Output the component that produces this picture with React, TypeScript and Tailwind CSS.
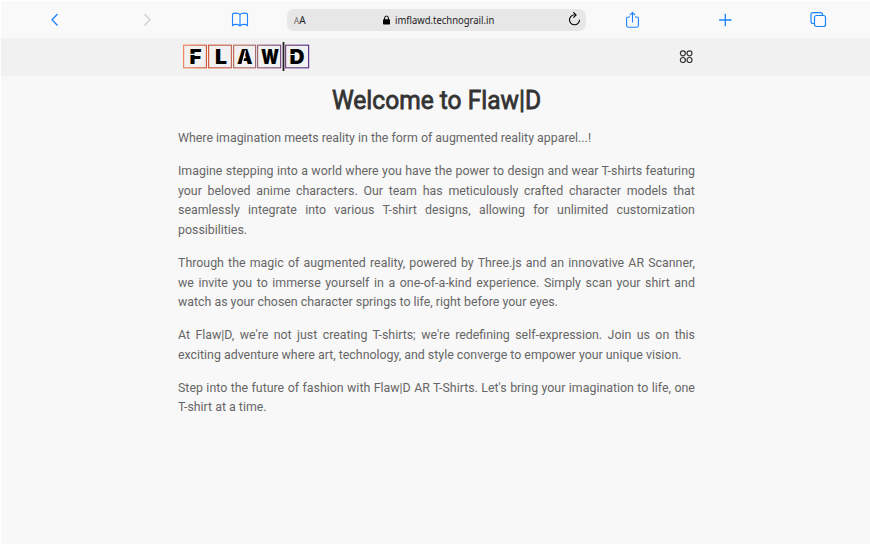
import React from "react";

const paragraphs: string[][] = [
  ["Where imagination meets reality in the form of augmented reality apparel...!"],
  [
    "Imagine stepping into a world where you have the power to design and wear T-shirts featuring",
    "your beloved anime characters. Our team has meticulously crafted character models that",
    "seamlessly integrate into various T-shirt designs, allowing for unlimited customization",
    "possibilities.",
  ],
  [
    "Through the magic of augmented reality, powered by Three.js and an innovative AR Scanner,",
    "we invite you to immerse yourself in a one-of-a-kind experience. Simply scan your shirt and",
    "watch as your chosen character springs to life, right before your eyes.",
  ],
  [
    "At Flaw|D, we're not just creating T-shirts; we're redefining self-expression. Join us on this",
    "exciting adventure where art, technology, and style converge to empower your unique vision.",
  ],
  [
    "Step into the future of fashion with Flaw|D AR T-Shirts. Let's bring your imagination to life, one",
    "T-shirt at a time.",
  ],
];

function Toolbar() {
  return (
    <div className="flex h-[37px] items-center bg-[#f9f9f9] text-[#1a84ff]">
      <svg className="ml-[49px] h-4 w-2.5" viewBox="0 0 10 16" fill="none" stroke="currentColor" strokeWidth="1.3">
        <path d="M7.500 2 2 7.800l5.500 5.700" />
      </svg>
      <svg className="ml-[82px] h-4 w-2.5 text-[#cfcfcf]" viewBox="0 0 10 16" fill="none" stroke="currentColor" strokeWidth="1.3">
        <path d="m2.500 2 5.500 5.800-5.500 5.700" />
      </svg>
      <svg className="ml-[79px] h-4 w-[18px]" viewBox="0 0 18 16" fill="none" stroke="currentColor" strokeWidth="1.1">
        <path d="M9 2.700C8.200 1.500 6.800 1.100 5 1.100S1.800 1.500 1.500 2.100v11.300c.6-.7 1.900-1 3.500-1s3.200.3 4 1.500c.8-1.200 2.400-1.500 4-1.500s2.900.3 3.500 1V2.100c-.3-.6-1.700-1-3.500-1S9.800 1.500 9 2.700Zm0 0v11.200" />
      </svg>
      <div className="ml-[38px] flex h-[22px] w-[299px] items-center rounded-[7px] bg-[#e7e7e7] font-['Noto_Sans',sans-serif] text-[#222]">
        <span className="ml-[7px] flex w-[13px] items-baseline leading-none">
          <span className="text-[8px] text-[#666]">A</span>
          <span className="text-[10px]">A</span>
        </span>
        <svg className="ml-[76px] h-[10px] w-[7px] text-black" viewBox="0 0 7 10">
          <path d="M1.600 5V3a1.900 1.900 0 0 1 3.800 0v2" fill="none" stroke="currentColor" />
          <rect y="4.200" width="7" height="5.300" rx=".8" fill="currentColor" />
        </svg>
        <span className="ml-[5px] w-[99px] origin-left scale-x-[0.945] whitespace-nowrap text-[10px] leading-none">
          imflawd.technograil.in
        </span>
        <svg className="ml-[74px] h-[15px] w-[13px] text-black" viewBox="0 0 13 15" fill="none" stroke="currentColor" strokeWidth="1.1">
          <path d="M7.500 2.800H6.500a5 5 0 1 0 5 5" />
          <path d="m5.300.2 2.800 2.700-2.800 2.700" />
        </svg>
      </div>
      <svg className="ml-[39px] h-[18px] w-[15px]" viewBox="0 0 15 18" fill="none" stroke="currentColor" strokeWidth="1.1">
        <path d="M5 6H3.200Q1.600 6 1.600 7.600v7q0 1.600 1.600 1.600h8.600q1.600 0 1.600-1.600v-7q0-1.600-1.600-1.600H10M7.500 11.500V1.500M4.900 4.100l2.600-2.600 2.600 2.600" />
      </svg>
      <svg className="ml-[78px] h-[14px] w-[14px]" viewBox="0 0 14 14" fill="none" stroke="currentColor" strokeWidth="1.3">
        <path d="M7.300 .8v12.400M1.100 7h12.400" />
      </svg>
      <svg className="ml-[78px] h-4 w-[17px]" viewBox="0 0 17 16" fill="none" stroke="currentColor" strokeWidth="1.2">
        <rect x="4.500" y="3.500" width="11" height="11" rx="2" />
        <path d="M4.500 11.500H3Q1 11.500 1 9.500V2.600q0-2 2-2h7.500q2 0 2 2v.9" />
      </svg>
    </div>
  );
}

function Logo() {
  return (
    <svg className="h-[30px] w-[128px]" viewBox="0 0 128 30">
      <defs>
        <linearGradient id="frame" gradientUnits="userSpaceOnUse" x1="0" y1="0" x2="128" y2="0">
          <stop offset="0" stopColor="#f08a68" />
          <stop offset=".2" stopColor="#d5593b" />
          <stop offset=".5" stopColor="#b8766c" />
          <stop offset=".7" stopColor="#84587f" />
          <stop offset="1" stopColor="#5b3288" />
        </linearGradient>
      </defs>
      <g fill="none" stroke="url(#frame)" strokeWidth="1.200">
        <rect x="1.600" y="3.200" width="22.800" height="22.600" />
        <rect x="26.600" y="3.200" width="22.800" height="22.600" />
        <rect x="51.600" y="3.200" width="22" height="22.600" />
        <rect x="75.600" y="3.200" width="23" height="22.600" />
        <rect x="103.600" y="3.200" width="23" height="22.600" />
      </g>
      <path d="M101.500 0v29" stroke="#29242b" strokeWidth="1.800" />
      <g className="font-['Inter',sans-serif] font-black" fontSize="19.500" fill="#000">
        <text x="7.500" y="22" textLength="12" lengthAdjust="spacingAndGlyphs">F</text>
        <text x="33" y="22" textLength="12" lengthAdjust="spacingAndGlyphs">L</text>
        <text x="55" y="22" textLength="15.500" lengthAdjust="spacingAndGlyphs">A</text>
        <text x="79" y="22" textLength="18" lengthAdjust="spacingAndGlyphs">W</text>
        <text x="107.500" y="22" textLength="15" lengthAdjust="spacingAndGlyphs">D</text>
      </g>
      <g stroke="#f1f1f1" strokeWidth="1.200">
        <path d="M7 12.400h13M60 22.500l3.500-14M107 12.500h6" />
      </g>
    </svg>
  );
}

function MenuIcon() {
  return (
    <svg className="h-[14px] w-[14px]" viewBox="0 0 14 14" fill="none" stroke="#333" strokeWidth="1.200">
      <circle cx="3.900" cy="3.300" r="2.500" />
      <circle cx="10.500" cy="3.300" r="2.500" />
      <circle cx="3.900" cy="10" r="2.500" />
      <circle cx="10.500" cy="10" r="2.500" />
    </svg>
  );
}

export default function App() {
  return (
    <div className="h-[544px] w-[870px] overflow-hidden border-t border-l border-white bg-[#f8f8f8] font-['Roboto',sans-serif]">
      <Toolbar />
      <header className="flex h-[38px] items-center justify-between bg-[#f1f1f1] pr-[177px] pl-[181px]">
        <Logo />
        <MenuIcon />
      </header>
      <main className="ml-[177px] w-[517px]">
        <h1 className="mt-[8px] origin-center scale-x-[0.937] text-center text-[26.200px] leading-[32px] font-normal text-[#333] [-webkit-text-stroke:0.8px_#333]">
          Welcome to Flaw|D
        </h1>
        <div className="mt-[12px] flex w-[547px] origin-left scale-x-[0.945] flex-col gap-[13.300px] text-[13.100px] leading-[19.650px] text-[#666]">
          {paragraphs.map((lines) => (
            <p key={lines[0]}>
              {lines.map((line, i) => (
                <span
                  key={line}
                  className={i < lines.length - 1 ? "block whitespace-nowrap [text-align-last:justify]" : "block whitespace-nowrap"}
                >
                  {line}
                </span>
              ))}
            </p>
          ))}
        </div>
      </main>
    </div>
  );
}
